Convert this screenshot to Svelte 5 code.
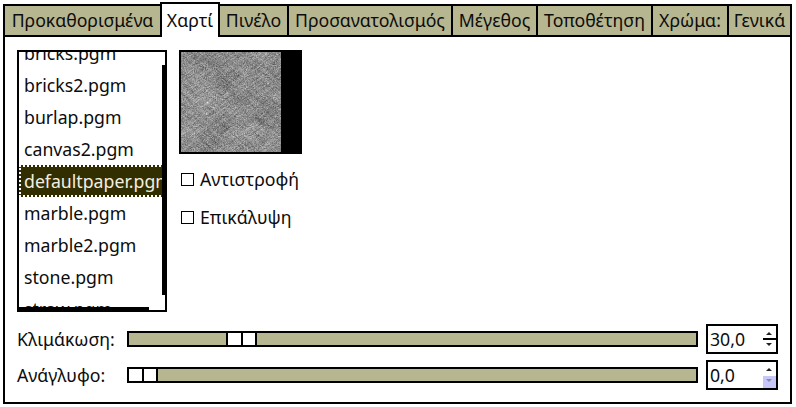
<script>
  const tabs = [
    ['Προκαθορισμένα', 157], ['Χαρτί', 60], ['Πινέλο', 69], ['Προσανατολισμός', 164],
    ['Μέγεθος', 85], ['Τοποθέτηση', 115], ['Χρώμα:', 76], ['Γενικά', 62]
  ];
  const files = ['bricks.pgm','bricks2.pgm','burlap.pgm','canvas2.pgm','defaultpaper.pgm','marble.pgm','marble2.pgm','stone.pgm','straw.pgm'];
</script>

<div class="page">
  <div class="notebook">
    <div class="tabs">
      {#each tabs as [label, w], i}
        <div class="tab" class:active={i === 1} style="width:{w}px">{label}</div>
      {/each}
    </div>
    <div class="panel">
      <div class="top">
        <div class="list">
          <div class="rows">
            {#each files as f}
              <div class="row" class:sel={f === 'defaultpaper.pgm'}>{f}</div>
            {/each}
          </div>
          <div class="vbar"></div>
          <div class="hbar"></div>
        </div>
        <div class="side">
          <div class="preview">
            <svg width="100" height="100" viewBox="0 0 100 100">
              <filter id="streak" x="0" y="0" width="100%" height="100%" color-interpolation-filters="sRGB">
                <feTurbulence type="fractalNoise" baseFrequency="0.05 0.6" numOctaves="4" seed="7" />
                <feColorMatrix type="matrix" values="1.05 0 0 0 0.02  1.05 0 0 0 0.02  1.05 0 0 0 0.02  0 0 0 0 1" />
              </filter>
              <filter id="streak2" x="0" y="0" width="100%" height="100%" color-interpolation-filters="sRGB">
                <feTurbulence type="fractalNoise" baseFrequency="0.04 0.55" numOctaves="4" seed="21" />
                <feColorMatrix type="matrix" values="1.05 0 0 0 0.02  1.05 0 0 0 0.02  1.05 0 0 0 0.02  0 0 0 0 1" />
              </filter>
              <filter id="blotch" x="0" y="0" width="100%" height="100%" color-interpolation-filters="sRGB">
                <feTurbulence type="fractalNoise" baseFrequency="0.03" numOctaves="2" seed="3" />
                <feColorMatrix type="matrix" values="1.2 0 0 0 -0.05  1.2 0 0 0 -0.05  1.2 0 0 0 -0.05  0 0 0 0 1" />
              </filter>
              <filter id="grain" x="0" y="0" width="100%" height="100%" color-interpolation-filters="sRGB">
                <feTurbulence type="fractalNoise" baseFrequency="0.9" numOctaves="2" seed="11" />
                <feColorMatrix type="matrix" values="1.4 0 0 0 -0.15  1.4 0 0 0 -0.15  1.4 0 0 0 -0.15  0 0 0 0 1" />
              </filter>
              <rect width="100" height="100" fill="#8a8a8a" />
              <g transform="rotate(-38 50 50)"><rect x="-40" y="-40" width="180" height="180" filter="url(#streak)" /></g>
              <g transform="rotate(40 50 50)" opacity="0.45"><rect x="-40" y="-40" width="180" height="180" filter="url(#streak2)" /></g>
              <rect width="100" height="100" filter="url(#grain)" opacity="0.4" />
              <rect width="100" height="100" filter="url(#blotch)" opacity="0.15" />
            </svg>
          </div>
          <label class="check"><span class="box"></span>Αντιστροφή</label>
          <label class="check second"><span class="box"></span>Επικάλυψη</label>
        </div>
      </div>
      <div class="scale">
        <span class="lab">Κλιμάκωση:</span>
        <div class="trough"><div class="knob at30"><i></i><i></i></div></div>
        <div class="spin"><span class="val">30,0</span>
          <div class="btns"><b class="up"></b><b class="dn"></b></div></div>
      </div>
      <div class="scale second">
        <span class="lab">Ανάγλυφο:</span>
        <div class="trough"><div class="knob"><i></i><i></i></div></div>
        <div class="spin"><span class="val">0,0</span>
          <div class="btns"><b class="up"></b><b class="dn off"></b></div></div>
      </div>
    </div>
  </div>
</div>

<style>
  :global(body) { margin: 0; background: #fff; }
  .page {
    width: 796px; height: 407px; box-sizing: border-box; padding: 4px 4px 3px 3px;
    font: 17.7px/20px "Noto Sans", sans-serif; color: #0c0c0c; background: #fff; overflow: hidden;
  }
  .notebook { display: flex; flex-direction: column; height: 100%; }
  .tabs {
    display: flex; height: 33px; box-sizing: border-box;
    border: 2px solid #000; background: #b6b690;
  }
  .tab {
    box-sizing: border-box; text-align: center; line-height: 29px; flex: none;
    border-right: 2px solid #000; white-space: nowrap;
  }
  .tab:last-child { border-right: 0; flex: 1; }
  .tab.active {
    background: #fff; height: 35px; margin-top: -4px; line-height: 33px;
    border: 2px solid #000; border-bottom: 0; margin-left: -2px; position: relative;
  }
  .panel {
    flex: 1; border: 2px solid #000; border-top: 0; padding: 13px 12px 0 12px;
    display: flex; flex-direction: column;
  }
  .top { display: flex; gap: 12px; height: 262px; }
  .list {
    width: 150px; height: 262px; box-sizing: border-box; border: 2px solid #000;
    position: relative; overflow: hidden; flex: none;
  }
  .rows { margin-top: -15px; width: 143px; overflow: hidden; }
  .row {
    height: 32px; line-height: 32px; padding-left: 5px; white-space: nowrap;
    width: 170px; box-sizing: border-box;
  }
  .row.sel {
    background: #332e00; color: #f2efe0; outline: 2px dotted #fff; outline-offset: -2px;
  }
  .vbar { position: absolute; left: 143px; top: 13px; width: 3px; height: 230px; background: #000; }
  .hbar { position: absolute; left: 0; bottom: 0; width: 130px; height: 3px; background: #000; }
  .side { display: flex; flex-direction: column; }
  .preview {
    width: 123px; height: 104px; box-sizing: border-box; background: #000; padding: 2px;
    display: flex;
  }
  .preview svg { display: block; background: #888; }
  .check { display: flex; align-items: center; gap: 6px; height: 20px; margin: 15px 0 0 2px; }
  .check.second { margin-top: 18px; }
  .box { width: 13px; height: 13px; box-sizing: border-box; border: 1px solid #000; background: #fff; flex: none; }
  .scale { display: flex; align-items: center; margin-top: 12px; height: 30px; }
  .scale.second { margin-top: 6px; }
  .lab { width: 110px; flex: none; box-sizing: border-box; }
  .trough {
    width: 571px; height: 16px; box-sizing: border-box; border: 2px solid #000;
    background: #b6b690; flex: none; display: flex;
  }
  .knob { display: flex; gap: 2px; background: #000; padding-right: 2px; height: 12px; width: 29px; box-sizing: border-box; }
  .knob.at30 { margin-left: 97px; padding-left: 2px; width: 31px; }
  .knob i { flex: 1; background: #fff; }
  .spin {
    width: 72px; height: 30px; box-sizing: border-box; border: 2px solid #000; margin-left: 8px;
    display: flex; justify-content: space-between; flex: none; background: #fff;
  }
  .val { padding-left: 2px; line-height: 26px; }
  .btns { width: 13px; display: flex; flex-direction: column; }
  .btns b { flex: 1; position: relative; display: block; }
  .btns .dn { border-top: 2px solid #000; }
  .btns .up::after, .btns .dn::after {
    content: ""; position: absolute; left: 3px; top: 6px; border: 3px solid transparent; border-top: 0; border-bottom: 3px solid #222;
  }
  .btns .dn::after { border-bottom: 0; border-top: 3px solid #222; top: 3px; }
  .btns .dn.off { background: #c8c8f8; border-top-color: #fff; }
  .btns .dn.off::after { border-top-color: #8a8aa8; }
</style>
